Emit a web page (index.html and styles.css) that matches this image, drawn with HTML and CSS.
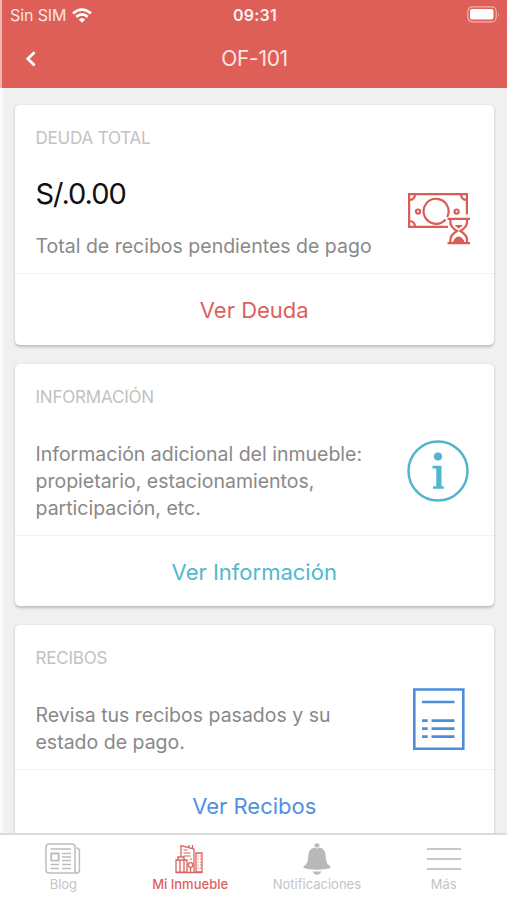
FILE: index.html
```html
<!DOCTYPE html>
<html lang="es">
<head>
<meta charset="utf-8">
<title>OF-101</title>
<link rel="stylesheet" href="styles.css">
</head>
<body>
<div class="app">
  <header class="header">
    <div class="status">
      <div class="carrier"><span class="carrier-name">Sin SIM</span>
        <svg width="20" height="15" viewBox="0 0 20 15" fill="none" stroke="#fff" stroke-width="2.7"><path d="M1 5.4Q10-2.3 19 5.4M4.2 8.9Q10 4 15.8 8.9"/><path d="M6.7 11.5Q10 8.5 13.3 11.5L10 14.8Z" fill="#fff" stroke="none"/></svg>
      </div>
      <span class="time">09:31</span>
      <svg class="battery" width="33" height="17" viewBox="0 0 33 17"><rect x=".8" y=".8" width="28.4" height="15" rx="4.5" fill="none" stroke="#f2b3ae" stroke-width="1.2"/><rect x="3" y="3" width="23.5" height="10.5" rx="2" fill="#fff"/><path d="M31 6v5q1.5-2.5 0-5" fill="#f2b3ae"/></svg>
    </div>
    <div class="nav">
      <svg class="back" width="12" height="18" viewBox="0 0 12 18" fill="none" stroke="#fff" stroke-width="2.8"><path d="M9.6 2.2 2.8 8.8l6.8 6.6"/></svg>
      <h1 class="title">OF-101</h1>
    </div>
  </header>

  <main class="content">
    <section class="card debt">
      <div class="summary">
        <div class="copy">
          <h2 class="label">DEUDA TOTAL</h2>
          <div class="amount">S/.0.00</div>
          <p class="desc">Total de recibos pendientes de pago</p>
        </div>
        <svg class="icon" width="64" height="64" viewBox="0 0 64 64" fill="none" stroke="#d95c55" stroke-width="2.2">
          <path d="M41 38.8H2.1V6.1h57.8v20.5M2 12q6 0 6-6M54 6q0 6 6 6M2 33q6 0 6 6"/>
          <path d="M40.2 29A12.5 12.5 0 1 0 38.5 31.5"/>
          <circle cx="11" cy="23.6" r="2.1"/><circle cx="49.6" cy="23.6" r="2.1"/>
          <path d="M40.5 30.8h22.5M40.5 55.2h22.5M43.4 31v3.5c0 4 3 6.2 6.5 8.5-3.5 2.3-6.5 4.5-6.5 8.500V55M60 31v3.5c0 4-3 6.200-6.500 8.500 3.500 2.300 6.500 4.500 6.500 8.500V55"/>
          <path d="M48.400 37.500h6.800l-3.400 2.600zM46.500 54c1-3.500 3-5 5.200-5s4.200 1.500 5.200 5z" fill="#d95c55" stroke-width="1"/>
        </svg>
      </div>
      <a class="action">Ver Deuda</a>
    </section>

    <section class="card info">
      <div class="summary">
        <div class="copy">
          <h2 class="label">INFORMACIÓN</h2>
          <p class="desc">Información adicional del inmueble:<br>propietario, estacionamientos,<br>participación, etc.</p>
        </div>
        <svg class="icon" width="64" height="64" viewBox="0 0 64 64"><circle cx="31" cy="32" r="29.500" fill="none" stroke="#51b6cd" stroke-width="2.500"/><circle cx="31" cy="17.500" r="4.100" fill="#51b6cd"/><path d="M25.500 26.800h9v20.400h2.200v2.500H26v-2.500h3.300V29.500h-3.800z" fill="#51b6cd"/></svg>
      </div>
      <a class="action">Ver Información</a>
    </section>

    <section class="card receipts">
      <div class="summary">
        <div class="copy">
          <h2 class="label">RECIBOS</h2>
          <p class="desc">Revisa tus recibos pasados y su<br>estado de pago.</p>
        </div>
        <svg class="icon" width="64" height="64" viewBox="0 0 64 64" fill="none" stroke="#4c8edb" stroke-width="2.600"><path d="M7.300 2.500h49v59.200h-49zM15 15h32.500M15 33.600h5.700M24.500 33.600h23M15 41.600h5.700M24.500 41.600h23M15 49.600h5.700M24.500 49.600h23"/></svg>
      </div>
      <a class="action">Ver Recibos</a>
    </section>
  </main>

  <nav class="tabs">
    <a class="tab blog">
      <svg width="36" height="34" viewBox="0 0 36 34" fill="none" stroke="#bdbdbd" stroke-width="1.500"><path d="M30 4.500V28q0 3 2.200 3t2.200-3V9q0-3-3.200-3M32.200 31H4q-3 0-3-3V5q0-3 3-3h23q3 0 3 3"/><path d="M5.500 7h20.500M17 11.500h9M17 15h9M17 18.500h9M5.500 22.500h8.500M17 22.500h9M5.500 26.500h8.500M17 26.500h9"/><path d="M6.200 11.500h7.500v7.200H6.200z" stroke-width="1.800"/></svg>
      <span>Blog</span>
    </a>
    <a class="tab home">
      <svg width="36" height="34" viewBox="0 0 36 34" fill="none" stroke="#d9625b" stroke-width="1.300"><path d="M9 14V3.500L22 7v10M9 3.500V14M22 9V30M17 5.500V3M20.500 6V3M24 11h6v19h-6zM4 18h11v12.200H4zM6 18v-3h6v3M8 18v12M12 18v12M3.500 30.500h27"/><path d="M11.500 8h4M11.500 11h7M11.500 14h7M18 17h2M25.500 14h1M28 14h1M25.500 17h1M28 17h1M25.500 20h1M28 20h1M25.500 23h1M28 23h1M25.500 26h1M28 26h1" stroke-width="1.200"/><circle cx="18.600" cy="23" r="2.300"/><path d="M18.600 25v5"/></svg>
      <span>Mi Inmueble</span>
    </a>
    <a class="tab alerts">
      <svg width="36" height="36" viewBox="0 0 36 36" fill="#b8b8b8"><circle cx="18" cy="3.900" r="2.700"/><path d="M18 5.500c7 0 9 4.500 9.200 9 .3 6 1.300 8.500 4.200 10.700 2.200 1.700.2 2.800-2.400 3.200q-11 1.800-22 0c-2.600-.4-4.600-1.500-2.400-3.200 2.900-2.200 3.900-4.700 4.200-10.700.2-4.500 2.200-9 9.200-9M13.500 31q4.500.7 9 0-1 3.600-4.500 3.600T13.500 31"/><path d="M15.100 4.400a3.100 3.100 0 0 0 5.800 0" fill="none" stroke="#fff"/></svg>
      <span>Notificaciones</span>
    </a>
    <a class="tab more">
      <svg width="36" height="34" viewBox="0 0 36 34" stroke="#c8c8c8" stroke-width="2"><path d="M1 7h34M1 17h34M1 27h34"/></svg>
      <span>Más</span>
    </a>
  </nav>
</div>
</body>
</html>
```
FILE: styles.css
```css
* { box-sizing: border-box; }
body { margin: 0; background: #fff; font-family: Inter, "Liberation Sans", sans-serif; }
h1, h2, p { margin: 0; font-weight: 400; }
svg { display: block; flex: none; }
.app { height: 900px; display: flex; flex-direction: column; overflow: hidden; }

.header { height: 88px; flex: none; background: #dd5f58; border-left: 2px solid #f0b6b2; color: #fce4e2; }
.status { height: 30px; display: grid; grid-template-columns: 1fr auto 1fr; align-items: center; padding: 0 7px 0 8px; }
.carrier { display: flex; align-items: center; gap: 6px; font-size: 16px; }
.carrier-name { letter-spacing: -0.1px; }
.time { font-size: 16px; font-weight: 600; letter-spacing: .2px; color: #fff0ee; }
.battery { justify-self: end; margin-top: -2px; }
.nav { height: 57px; display: grid; grid-template-columns: 48px 1fr 48px; align-items: center; }
.back { margin-left: 23px; }
.title { text-align: center; font-size: 21px; letter-spacing: -.3px; }

.content { flex: 1; min-height: 0; overflow: hidden; background: #f0f0f0; border-left: 3px solid #f9f9f9; padding: 17px 13.500px 0 12px; display: flex; flex-direction: column; gap: 19px; }
.card { flex: none; background: #fff; border-radius: 5px; box-shadow: 0 1.500px 3px rgba(0,0,0,.22); }
.debt { height: 240px; }
.info { height: 242px; }
.receipts { height: 218px; }
.summary { display: flex; justify-content: space-between; padding: 21px 22.500px 13px 20.500px; border-bottom: 1.500px solid #f2f2f2; }
.label { font-size: 17px; line-height: 24px; color: #c2c2c2; letter-spacing: -.2px; }
.amount { margin: 26px 0 21px; font-size: 29px; line-height: 36px; letter-spacing: -1px; color: #111; }
.desc { font-size: 19.500px; line-height: 27px; color: #898989; white-space: nowrap; }
.info .desc, .receipts .desc { margin-top: 32px; }
.icon { margin: 54px 0 -20px -64px; }
.debt .icon { margin-top: 62px; }
.receipts .icon { margin-top: 41px; }
.action { display: block; text-align: center; font-size: 22px; line-height: 30px; padding-top: 21px; }
.debt .action { color: #db625c; }
.info .action { color: #50b8cf; }
.receipts .action { color: #4f91de; }

.tabs { height: 67px; flex: none; background: #fff; border-top: 2px solid #dadada; display: grid; grid-template-columns: repeat(4, 1fr); }
.tab { display: flex; flex-direction: column; align-items: center; padding-top: 7px; color: #c4c4c4; font-size: 13px; line-height: 16px; white-space: nowrap; }
.tab svg { height: 34px; }
.home { color: #db625c; font-weight: 500; }
```
